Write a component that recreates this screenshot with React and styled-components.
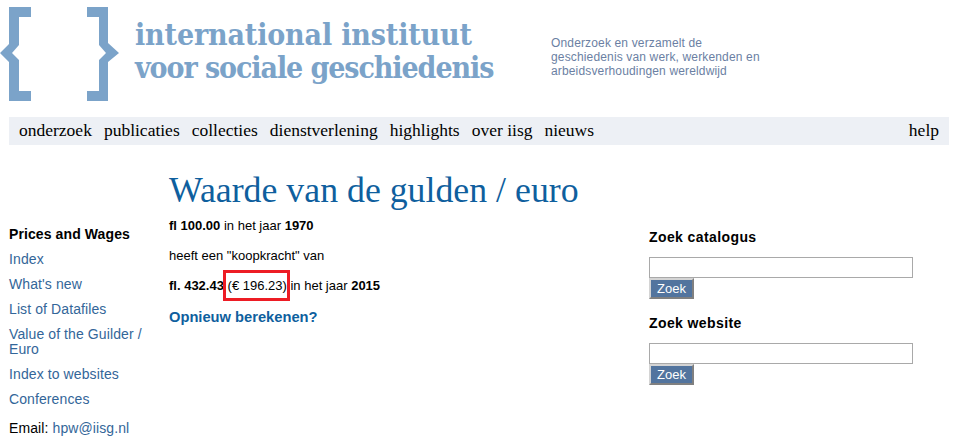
import React from "react";
import styled, { createGlobalStyle } from "styled-components";

const Global = createGlobalStyle`
  html, body { margin: 0; padding: 0; background: #fff; }
  body { font-family: "Liberation Sans", Arial, sans-serif; font-size: 13px; color: #000; overflow: hidden; }
`;
const Page = styled.div`width: 955px; height: 446px; overflow: hidden;`;
const Header = styled.header`display: flex; height: 117px; align-items: flex-start;`;
const LogoMark = styled.svg`display: block; width: 120px; height: 102px; flex: none; margin-right: 15px;`;
const LogoText = styled.div`
  font-family: "DejaVu Serif Condensed", "DejaVu Serif", serif; font-weight: 700; font-size: 30px; line-height: 33px;
  color: #7ba3c9; width: 416px; padding-top: 18px; white-space: nowrap;
`;
const LogoLine = styled.div`letter-spacing: ${(p) => p.$spacing}px;`;
const Tagline = styled.div`
  font-size: 12px; line-height: 14px; letter-spacing: 0.15px; color: #6b7fa3; padding-top: 36px;
`;
const Nav = styled.nav`
  margin: 0 6px 0 9px; height: 28px; box-sizing: border-box; padding: 0 10px 2px; background: #edf0f5;
  display: flex; align-items: center;
  font-family: "Liberation Serif", serif; font-size: 17.5px; color: #000;
`;
const NavItem = styled.a`margin-right: 12px; &:last-child { margin: 0 0 0 auto; }`;
const Columns = styled.div`display: grid; grid-template-columns: 169px 471px 1fr;`;
const Side = styled.aside`padding: 82px 0 0 9px; font-size: 14px; line-height: 15px; letter-spacing: 0.1px;`;
const SideTitle = styled.div`font-weight: 700; margin-bottom: 10px;`;
const SideLink = styled.a`display: block; color: #336699; margin-bottom: 10px;`;
const SideMail = styled.div`margin-top: 14px; a { color: #336699; }`;
const Main = styled.main`padding-top: 26px;`;
const Title = styled.h1`
  margin: 0 0 9px; font-family: "Liberation Serif", serif; font-weight: 400; font-size: 35.8px; line-height: 38px;
  color: #0f5f9e;
`;
const Line = styled.p`margin: 0 0 15px; font-size: 13px; line-height: 15px;`;
const Marked = styled.span`
  position: relative;
  &::after { content: ""; position: absolute; left: -5px; right: -3px; top: -8px; bottom: -8px; border: 3px solid #ed1c24; }
`;
const Again = styled.a`display: block; font-size: 14.7px; font-weight: 700; color: #0f5f9e; line-height: 18px;`;
const Right = styled.aside`padding: 84px 0 0 9px;`;
const SearchTitle = styled.h3`margin: 0 0 12px; font-size: 14px; line-height: 16px; letter-spacing: 0.4px; font-weight: 700;`;
const SearchBox = styled.form`margin-bottom: 16px;`;
const Field = styled.input`
  display: block; box-sizing: border-box; width: 264px; height: 21px; margin: 0; padding: 0;
  border: 1px solid #a9a9a9; background: #fff;
`;
const Button = styled.button`
  display: block; box-sizing: border-box; width: 45px; height: 21px; padding: 0; margin: 0;
  background: #52749e; color: #fff; font-family: "Liberation Sans", sans-serif; font-size: 13px;
  border: 2px solid; border-color: #d4d4d4 #808080 #808080 #d4d4d4;
`;

const navItems = ["onderzoek","publicaties","collecties","dienstverlening","highlights","over iisg","nieuws","help"];
const sideItems = ["Index","What's new","List of Datafiles","Value of the Guilder / Euro","Index to websites","Conferences"];

export default function App() {
  return (
    <Page>
      <Global />
      <Header>
        <LogoMark viewBox="0 0 120 102">
          <path fill="#7ba3c9" d="M31 7H9V44L0 53L9 62V101H31V91H19V60L12 53L19 45V17H31Z" />
          <path fill="#7ba3c9" d="M87 7H108V43L119 53L108 62V101H87V91H99V60L106 53L99 45V17H87Z" />
        </LogoMark>
        <LogoText>
          <LogoLine $spacing={-0.15}>international instituut</LogoLine>
          <LogoLine $spacing={-1.08}>voor sociale geschiedenis</LogoLine>
        </LogoText>
        <Tagline>Onderzoek en verzamelt de<br />geschiedenis van werk, werkenden en<br />arbeidsverhoudingen wereldwijd</Tagline>
      </Header>
      <Nav>{navItems.map((n) => <NavItem key={n}>{n}</NavItem>)}</Nav>
      <Columns>
        <Side>
          <SideTitle>Prices and Wages</SideTitle>
          {sideItems.map((s) => <SideLink key={s}>{s}</SideLink>)}
          <SideMail>Email: <a>hpw@iisg.nl</a></SideMail>
        </Side>
        <Main>
          <Title>Waarde van de gulden / euro</Title>
          <Line><b>fl 100.00</b> in het jaar <b>1970</b></Line>
          <Line>heeft een "koopkracht" van</Line>
          <Line><b>fl. 432.43</b> <Marked>(€ 196.23)</Marked> in het jaar <b>2015</b></Line>
          <Again>Opnieuw berekenen?</Again>
        </Main>
        <Right>
          <SearchBox><SearchTitle>Zoek catalogus</SearchTitle><Field /><Button type="button">Zoek</Button></SearchBox>
          <SearchBox><SearchTitle>Zoek website</SearchTitle><Field /><Button type="button">Zoek</Button></SearchBox>
        </Right>
      </Columns>
    </Page>
  );
}
